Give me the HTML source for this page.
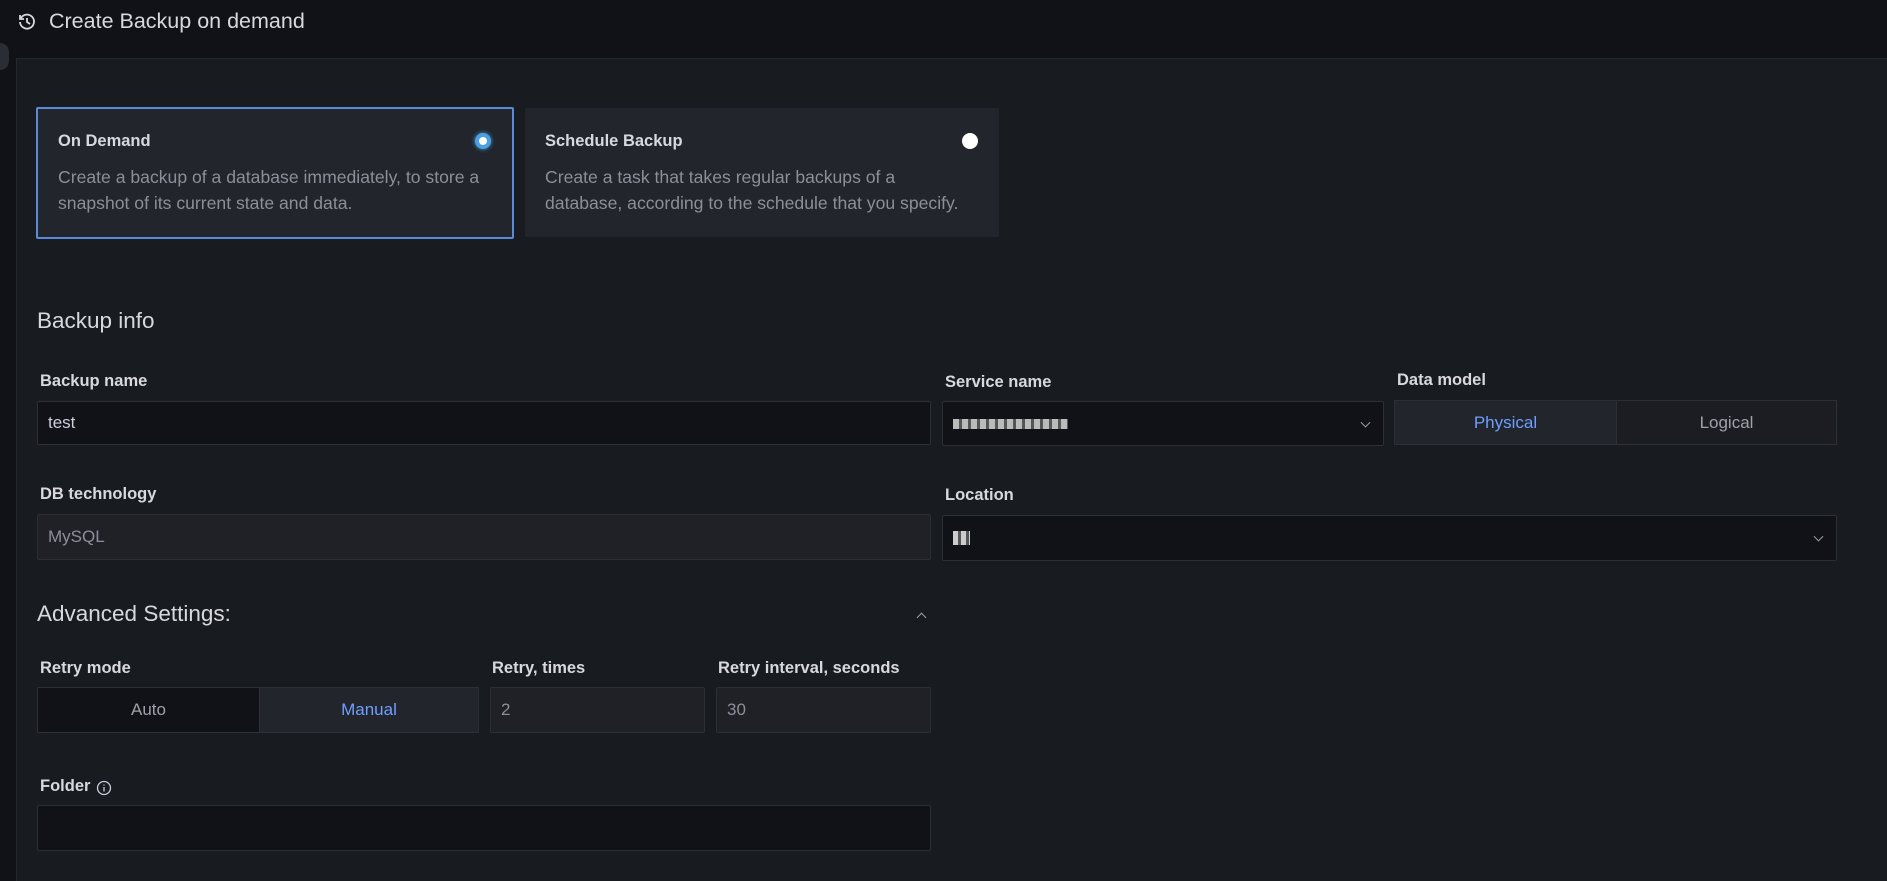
<!DOCTYPE html>
<html><head><meta charset="utf-8"><style>
*{box-sizing:border-box;margin:0;padding:0}
body{width:1887px;height:881px;background:#111217;font-family:"Liberation Sans",sans-serif;color:#ccccdc;position:relative;overflow:hidden}
.a{position:absolute}
.panel{left:16px;top:58px;width:1871px;height:823px;background:#181b1f;border-top:1px solid #24272d;border-left:1px solid #24272d}
.card{background:#22252b;border-radius:2px}
.ct{font-size:16.5px;font-weight:bold;color:#d8d9e0}
.cd{font-size:17.6px;line-height:26px;color:#8e8e9a}
.lbl{font-size:16.5px;font-weight:bold;color:#d8d9e0}
.in{background:#111217;border:1px solid #2c2f35;border-radius:2px;font-size:17px;color:#ccccdc;padding-left:10px;display:flex;align-items:center}
.dis{background:#1f2126;color:#8e8e9a}
.h{font-size:22.5px;color:#d8d9e0}
.seg{display:flex;align-items:center;justify-content:center;font-size:17px}
.chev{position:absolute;right:14px;top:50%;width:7px;height:7px;border-right:1.5px solid #9fa0aa;border-bottom:1.5px solid #9fa0aa;transform:translateY(-70%) rotate(45deg)}
</style></head><body>
<div class="a" style="left:0;top:43px;width:9px;height:27px;background:#2a2d33;border-radius:0 9px 9px 0"></div>
<svg class="a" style="left:17px;top:12px" width="20" height="20" viewBox="0 0 20 20" fill="none" stroke="#d8d9e0" stroke-width="1.8"><path d="M4 6 A7 7 0 1 1 3 10"/><path d="M3 3v4h4"/><path d="M10 6v4l3 2"/></svg>
<div class="a" style="left:49px;top:9px;font-size:21.5px;color:#d8d9e0">Create Backup on demand</div>
<div class="a panel"></div>

<div class="a card" style="left:36px;top:107px;width:478px;height:132px;border:2px solid #5b8ad8"></div>
<div class="a ct" style="left:58px;top:132px">On Demand</div>
<div class="a cd" style="left:58px;top:164px">Create a backup of a database immediately, to store a<br>snapshot of its current state and data.</div>
<div class="a" style="left:475px;top:133px;width:16px;height:16px;border-radius:50%;background:#fff;border:4px solid #4aa0e6;box-shadow:0 0 4px #4aa0e6"></div>

<div class="a card" style="left:525px;top:108px;width:474px;height:129px"></div>
<div class="a ct" style="left:545px;top:132px">Schedule Backup</div>
<div class="a cd" style="left:545px;top:164px">Create a task that takes regular backups of a<br>database, according to the schedule that you specify.</div>
<div class="a" style="left:962px;top:133px;width:16px;height:16px;border-radius:50%;background:#fff"></div>

<div class="a h" style="left:37px;top:308px">Backup info</div>
<div class="a lbl" style="left:40px;top:372px">Backup name</div>
<div class="a in" style="left:37px;top:401px;width:894px;height:44px">test</div>
<div class="a lbl" style="left:945px;top:373px">Service name</div>
<div class="a in" style="left:942px;top:401px;width:442px;height:45px"><span style="display:inline-block;width:115px;height:10px;background:repeating-linear-gradient(90deg,#bbb 0 6px,#555 6px 9px)"></span><i class="chev"></i></div>
<div class="a lbl" style="left:1397px;top:371px">Data model</div>
<div class="a" style="left:1394px;top:400px;width:443px;height:45px;border:1px solid #2c2f35;display:flex">
<div class="seg" style="width:221px;background:#22252b;color:#6e9fff">Physical</div>
<div class="seg" style="flex:1;background:#1b1d22;color:#9fa0aa;border-left:1px solid #2c2f35">Logical</div></div>

<div class="a lbl" style="left:40px;top:485px">DB technology</div>
<div class="a in dis" style="left:37px;top:514px;width:894px;height:46px">MySQL</div>
<div class="a lbl" style="left:945px;top:486px">Location</div>
<div class="a in" style="left:942px;top:515px;width:895px;height:46px"><span style="display:inline-block;width:17px;height:14px;background:repeating-linear-gradient(90deg,#ccc 0 5px,#555 5px 8px)"></span><i class="chev"></i></div>

<div class="a h" style="left:37px;top:601px">Advanced Settings:</div>
<div class="a" style="left:918px;top:614px;width:7px;height:7px;border-left:1.5px solid #9fa0aa;border-top:1.5px solid #9fa0aa;transform:rotate(45deg)"></div>

<div class="a lbl" style="left:40px;top:659px">Retry mode</div>
<div class="a" style="left:37px;top:687px;width:442px;height:46px;border:1px solid #2c2f35;display:flex">
<div class="seg" style="width:221px;background:#111217;color:#9fa0aa">Auto</div>
<div class="seg" style="flex:1;background:#22252b;color:#6e9fff;border-left:1px solid #2c2f35">Manual</div></div>
<div class="a lbl" style="left:492px;top:659px">Retry, times</div>
<div class="a in dis" style="left:490px;top:687px;width:215px;height:46px">2</div>
<div class="a lbl" style="left:718px;top:659px">Retry interval, seconds</div>
<div class="a in dis" style="left:716px;top:687px;width:215px;height:46px">30</div>

<div class="a lbl" style="left:40px;top:777px">Folder</div>
<svg class="a" style="left:96px;top:780px" width="16" height="16" viewBox="0 0 16 16" fill="none" stroke="#ccccdc" stroke-width="1.3"><circle cx="8" cy="8" r="6.5"/><path d="M8 7v4.5M8 4.5v1"/></svg>
<div class="a in" style="left:37px;top:805px;width:894px;height:46px"></div>
</body></html>
